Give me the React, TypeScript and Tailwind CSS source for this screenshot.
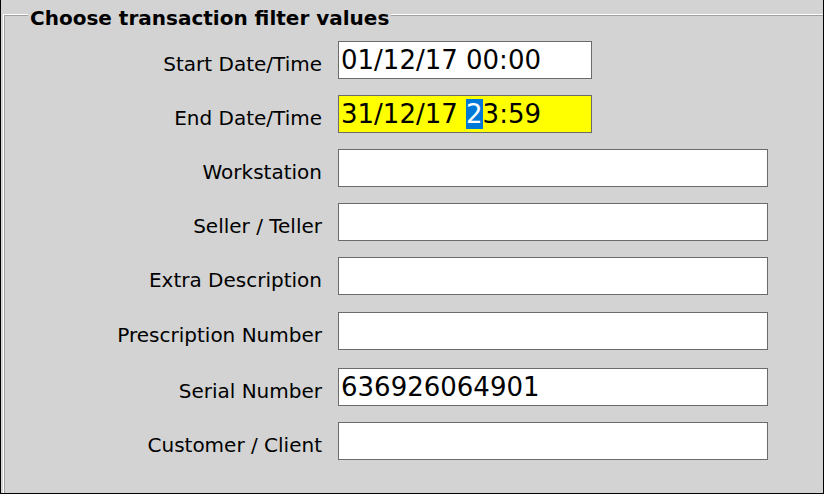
const rows: { label: string; value?: string; short?: boolean; yellow?: boolean; extra?: string }[] = [
  { label: 'Start Date/Time', value: '01/12/17 00:00', short: true },
  { label: 'End Date/Time', short: true, yellow: true },
  { label: 'Workstation' },
  { label: 'Seller / Teller' },
  { label: 'Extra Description' },
  { label: 'Prescription Number', extra: 'mt-[1px]' },
  { label: 'Serial Number', value: '636926064901', extra: 'mt-[2px]' },
  { label: 'Customer / Client' },
]

function Field({ row }: { row: (typeof rows)[number] }) {
  return (
    <div
      className={`h-[38px] border border-[#6b6b6b] pl-[2px] pt-[3px] text-[26px] leading-[30px] text-black whitespace-nowrap ${
        row.short ? 'w-[254px]' : 'w-[430px]'
      } ${row.yellow ? 'bg-[#ffff00]' : 'bg-white'}`}
    >
      {row.yellow ? (
        <>
          31/12/17 <span className="bg-[#0078d7] text-white">2</span>3:59
        </>
      ) : (
        row.value
      )}
    </div>
  )
}

export default function App() {
  return (
    <div
      className="w-[824px] h-[494px] bg-[#d3d3d3] border-l border-r border-b border-black overflow-hidden"
      style={{ fontFamily: '"DejaVu Sans", Verdana, sans-serif' }}
    >
      <div className="relative ml-[2px] mt-[14px] h-[479px] border-t border-l border-white">
        <div className="h-full border-t border-l border-[#a0a0a0]">
          <div className="flex flex-col gap-[16px] pt-[25px]">
            {rows.map((row) => (
              <div key={row.label} className={`flex items-start gap-[16px] ${row.extra ?? ''}`}>
                <div className="w-[317px] mt-[12px] text-right text-[20px] leading-[23px] text-black whitespace-nowrap">
                  {row.label}
                </div>
                <Field row={row} />
              </div>
            ))}
          </div>
        </div>
        <div className="absolute left-[24px] top-[-8px] bg-[#d3d3d3] px-[2px] text-[20px] leading-[22px] font-bold text-black whitespace-nowrap">
          Choose transaction filter values
        </div>
      </div>
    </div>
  )
}
